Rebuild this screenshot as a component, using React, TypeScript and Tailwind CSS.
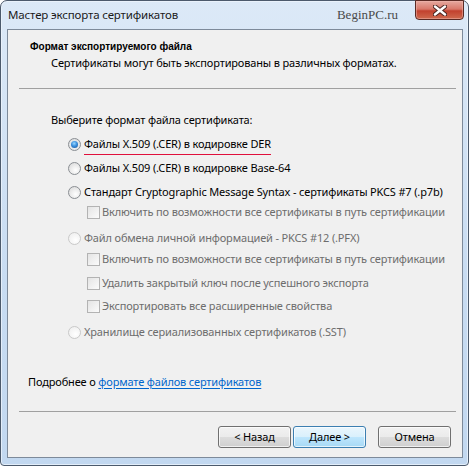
import React from "react";

function Radio({ checked = false, disabled = false }: { checked?: boolean; disabled?: boolean }) {
  if (checked) {
    return (
      <span className="w-[13px] h-[13px] rounded-full border border-[#8a8e93] bg-[radial-gradient(circle_at_50%_60%,#f6f6f6_0%,#d8dadc_100%)] flex items-center justify-center shrink-0">
        <span className="w-[7px] h-[7px] rounded-full bg-[radial-gradient(circle_at_45%_35%,#9ad8ff_0%,#3a8fde_45%,#1a4f8f_100%)]" />
      </span>
    );
  }
  if (disabled) {
    return (
      <span className="w-[13px] h-[13px] rounded-full border border-[#c9c9c9] bg-[radial-gradient(circle_at_60%_65%,#ffffff_0%,#ececec_100%)] shrink-0" />
    );
  }
  return (
    <span className="w-[13px] h-[13px] rounded-full border border-[#8a8e93] bg-[radial-gradient(circle_at_60%_65%,#ffffff_0%,#d6d6d6_100%)] shrink-0" />
  );
}

function Checkbox() {
  return (
    <span className="w-[13px] h-[13px] border border-[#b3b3b3] bg-[linear-gradient(135deg,#e4e4e4_0%,#fbfbfb_100%)] shrink-0" />
  );
}

function Btn({ children, def = false }: { children: React.ReactNode; def?: boolean }) {
  return (
    <div
      className={
        def
          ? "w-[73px] h-[22px] rounded-[3px] border border-[#3c7fb1] bg-[linear-gradient(#eaf6fd_0%,#d9f0fc_50%,#bee6fd_50%,#a7d9f5_100%)] shadow-[inset_0_0_0_1px_#ffffffb0] flex items-center justify-center text-[#000]"
          : "w-[73px] h-[22px] rounded-[3px] border border-[#707070] bg-[linear-gradient(#f2f2f2_0%,#ebebeb_50%,#dddddd_50%,#cfcfcf_100%)] shadow-[inset_0_0_0_1px_#ffffffb0] flex items-center justify-center text-[#000]"
      }
    >
      {children}
    </div>
  );
}

export default function App() {
  return (
    <div className="w-[469px] h-[466px] font-['Noto_Sans',sans-serif] text-[11px] tracking-[-0.15px] leading-[16px] text-[#000] bg-white">
      <div className="w-[469px] h-[466px] rounded-t-[7px] rounded-b-[4px] border border-[#4c5a6c] bg-[linear-gradient(#dce9f7_0%,#c8dcf2_60%,#c2d8f0_100%)] shadow-[inset_0_0_0_1px_#eef5fdc0] flex flex-col">
        {/* title bar */}
        <div className="h-[28px] flex items-start">
          <div className="pl-[7px] pt-[6px] text-[11.5px] leading-[16px] text-[#1b1b1b]">Мастер экспорта сертификатов</div>
          <div className="ml-auto pt-[6px] font-['Liberation_Serif',serif] tracking-normal text-[13px] leading-[16px] text-[#4a4a4a]">BeginPC.ru</div>
          <div className="ml-[17px] mr-[4px] w-[49px] h-[20px] -mt-px rounded-b-[4px] border border-[#5a2a24] bg-[linear-gradient(#e6a99f_0%,#d8786a_45%,#c2412e_55%,#cf6a4e_100%)] shadow-[inset_0_0_0_1px_#f0b8b080] flex items-center justify-center">
            <svg width="14" height="11" viewBox="0 0 14 11">
              <path d="M2 1.5 L12 9.5 M12 1.5 L2 9.5" stroke="#4a2420" strokeWidth="4.4" strokeLinecap="round" />
              <path d="M2 1.5 L12 9.5 M12 1.5 L2 9.5" stroke="#ffffff" strokeWidth="2.4" strokeLinecap="round" />
            </svg>
          </div>
        </div>

        {/* client area */}
        <div className="ml-[6px] mr-[5px] h-[429px] border border-[#7d8a9a] bg-[#f0f0f0] flex flex-col">
          {/* header */}
          <div className="h-[58px] pl-[22px] pt-[9px]">
            <div className="font-['Liberation_Sans',sans-serif] font-bold text-[10px] tracking-normal leading-[16px]">Формат экспортируемого файла</div>
            <div className="pl-[21px] leading-[16px]">Сертификаты могут быть экспортированы в различных форматах.</div>
          </div>
          <div className="ml-[11px] w-[437px] h-px bg-[#a0a0a0]" />

          {/* body */}
          <div className="h-[322px] flex flex-col pl-[43px] pt-[23px]">
            <div className="h-[16px] leading-[16px]">Выберите формат файла сертификата:</div>

            <div className="mt-[6px] h-[20px] pl-[17px] flex items-center gap-[3px]">
              <Radio checked />
              <span className="relative">
                Файлы X.509 (.CER) в кодировке DER
                <span className="absolute left-0 right-0 -bottom-[3px] h-px bg-[#e0103c]" />
              </span>
            </div>
            <div className="mt-[4px] h-[20px] pl-[17px] flex items-center gap-[3px]">
              <Radio />
              <span>Файлы X.509 (.CER) в кодировке Base-64</span>
            </div>
            <div className="mt-[4px] h-[20px] pl-[17px] flex items-center gap-[3px]">
              <Radio />
              <span className="whitespace-nowrap">Стандарт Cryptographic Message Syntax - сертификаты PKCS #7 (.p7b)</span>
            </div>
            <div className="h-[20px] pl-[36px] flex items-center gap-[2px] text-[#6d6d6d]">
              <Checkbox />
              <span className="whitespace-nowrap">Включить по возможности все сертификаты в путь сертификации</span>
            </div>
            <div className="mt-[6px] h-[20px] pl-[17px] flex items-center gap-[3px] text-[#6d6d6d]">
              <Radio disabled />
              <span>Файл обмена личной информацией - PKCS #12 (.PFX)</span>
            </div>
            <div className="mt-[1px] h-[20px] pl-[36px] flex items-center gap-[2px] text-[#6d6d6d]">
              <Checkbox />
              <span className="whitespace-nowrap">Включить по возможности все сертификаты в путь сертификации</span>
            </div>
            <div className="mt-[4px] h-[20px] pl-[36px] flex items-center gap-[2px] text-[#6d6d6d]">
              <Checkbox />
              <span>Удалить закрытый ключ после успешного экспорта</span>
            </div>
            <div className="mt-[3px] h-[20px] pl-[36px] flex items-center gap-[2px] text-[#6d6d6d]">
              <Checkbox />
              <span>Экспортировать все расширенные свойства</span>
            </div>
            <div className="mt-[6px] h-[20px] pl-[17px] flex items-center gap-[3px] text-[#6d6d6d]">
              <Radio disabled />
              <span>Хранилище сериализованных сертификатов (.SST)</span>
            </div>

            <div className="mt-[32px] -ml-[23px] h-[16px] leading-[16px]">
              Подробнее о{" "}
              <span className="text-[#0066cc] underline underline-offset-[2px]">формате файлов сертификатов</span>
            </div>
          </div>

          <div className="ml-[11px] w-[437px] h-px bg-[#a0a0a0]" />

          {/* buttons */}
          <div className="pt-[14px] pr-[11px] flex justify-end">
            <Btn>&lt; Назад</Btn>
            <div className="ml-[2px]">
              <Btn def>Далее &gt;</Btn>
            </div>
            <div className="ml-[12px]">
              <Btn>Отмена</Btn>
            </div>
          </div>
        </div>
      </div>
    </div>
  );
}
